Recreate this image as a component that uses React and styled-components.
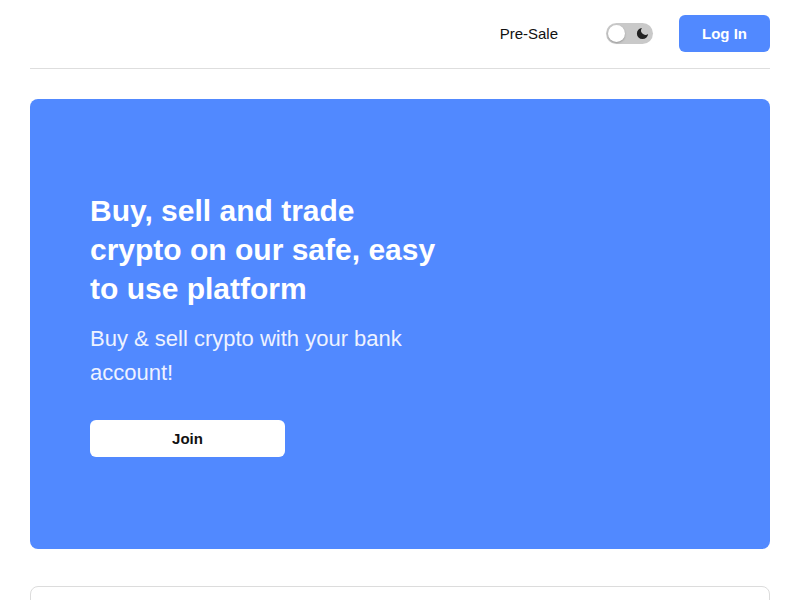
import styled, { createGlobalStyle } from "styled-components";

const GlobalStyle = createGlobalStyle`
  body {
    margin: 0;
    background: #fff;
    font-family: "Liberation Sans", Arial, sans-serif;
  }
`;

const Page = styled.div`
  padding: 0 30px;
`;

const Header = styled.header`
  height: 67px;
  padding-bottom: 1px;
  display: flex;
  align-items: center;
  justify-content: flex-end;
  border-bottom: 1px solid #dedede;
`;

const NavLink = styled.a`
  font-size: 15px;
  color: #111;
  margin-right: 48px;
`;

const Toggle = styled.div`
  position: relative;
  width: 47px;
  height: 21px;
  border-radius: 11px;
  background: #c9c9c9;
  margin-right: 26px;
  display: flex;
  align-items: center;
  justify-content: flex-end;
  padding-right: 3px;
  box-sizing: border-box;
`;

const Knob = styled.span`
  position: absolute;
  left: 2px;
  top: 2px;
  width: 17px;
  height: 17px;
  border-radius: 50%;
  background: #fff;
  box-shadow: 0 1px 2px rgba(0, 0, 0, 0.25);
`;

const LoginButton = styled.button`
  width: 91px;
  height: 37px;
  border: none;
  border-radius: 6px;
  background: #5189ff;
  color: #fff;
  font-family: inherit;
  font-size: 15px;
  font-weight: 700;
`;

const Hero = styled.section`
  margin-top: 30px;
  height: 450px;
  border-radius: 8px;
  background: #5189ff;
  display: flex;
  align-items: center;
  padding: 0 60px 1px;
  box-sizing: border-box;
`;

const HeroText = styled.div`
  width: 355px;
  color: #fff;
`;

const Title = styled.h1`
  margin: 0;
  font-size: 30px;
  line-height: 39px;
  font-weight: 700;
`;

const Subtitle = styled.p`
  margin: 14px 0 0;
  font-size: 22px;
  line-height: 34px;
  color: #eef2ff;
`;

const JoinButton = styled.button`
  margin-top: 30px;
  width: 195px;
  height: 37px;
  border: none;
  border-radius: 6px;
  background: #fff;
  color: #111;
  font-family: inherit;
  font-size: 15px;
  font-weight: 700;
`;

const Card = styled.div`
  margin-top: 37px;
  height: 80px;
  border: 1px solid #dcdcdc;
  border-radius: 8px;
`;

const Moon = () => (
  <svg width="15" height="15" viewBox="0 0 24 24">
    <path d="M21 12.8A9 9 0 1 1 11.2 3a7 7 0 0 0 9.8 9.8z" fill="#222" />
  </svg>
);

const App = () => {
  return (
    <Page>
      <GlobalStyle />
      <Header>
        <NavLink>Pre-Sale</NavLink>
        <Toggle>
          <Knob />
          <Moon />
        </Toggle>
        <LoginButton>Log In</LoginButton>
      </Header>
      <Hero>
        <HeroText>
          <Title>Buy, sell and trade crypto on our safe, easy to use platform</Title>
          <Subtitle>Buy &amp; sell crypto with your bank account!</Subtitle>
          <JoinButton>Join</JoinButton>
        </HeroText>
      </Hero>
      <Card />
    </Page>
  );
};

export default App;
